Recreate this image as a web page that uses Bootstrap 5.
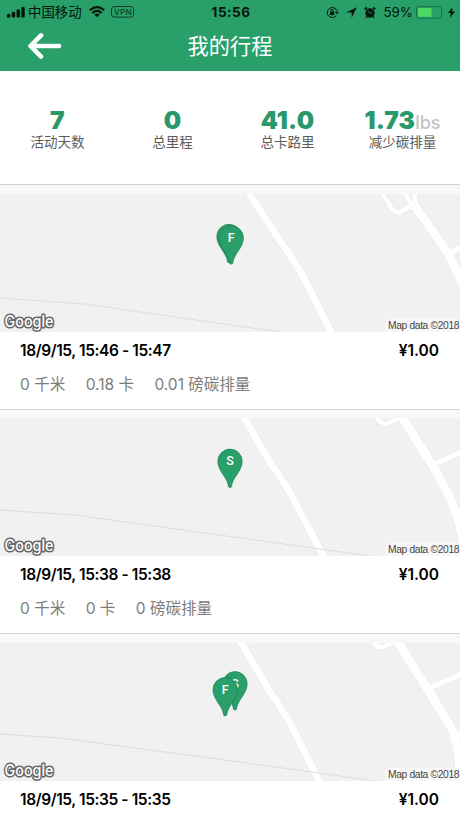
<!DOCTYPE html>
<html lang="zh-CN">
<head>
    <meta charset="UTF-8">
    <meta name="viewport" content="width=device-width, initial-scale=1.0">
    <title>我的行程</title>
    <!-- Bootstrap CSS -->
    <link href="https://cdn.jsdelivr.net/npm/bootstrap@5.3.0/dist/css/bootstrap.min.css" rel="stylesheet">
    <style>
        body {
            font-family: Inter, "Noto Sans CJK SC", sans-serif;
            background: #f8f8f8;
            height: 818px;
            overflow: hidden;
        }
        svg { display: block; flex-shrink: 0; }
        .app-top { background: #29a06a; height: 71px; }
        .status-bar { height: 24px; padding: 0 5px 0 7px; font-size: 13px; color: #04150c; line-height: 24px; }
        .status-side { flex: 1 1 0; }
        .status-clock { font-weight: 700; font-size: 13.5px; letter-spacing: .5px; }
        .title-bar { height: 47px; padding: 0 28px; color: #fff; }
        .title-bar h1 { font-size: 21.2px; line-height: 44px; font-weight: 400; padding-bottom: 3px; }
        .title-side { width: 34px; }
        .stats { height: 114px; background: #fff; border-bottom: 1px solid #d2d2d2; padding-top: 37px; }
        .stat-num { height: 25px; font-size: 24.5px; font-weight: 900; line-height: 25px; letter-spacing: .2px; color: #29986a; white-space: nowrap; }
        .stat-unit { font-size: 18px; font-weight: 500; line-height: 1; letter-spacing: 0; color: #c4c4c4; }
        .stat-label { font-size: 13.5px; line-height: 19px; color: #5c5c5c; }
        .trip { margin-top: 8.5px; height: 216px; background: #fff; border-bottom: 1px solid #d6d6d6; }
        .trip:last-child { height: 175px; border-bottom: 0; }
        .trip-map { height: 138px; }
        .trip-head { padding: 7px 21px 0 20px; font-size: 15.5px; line-height: 24px; font-weight: 600; color: #000; }
        .trip-time { letter-spacing: -.4px; }
        .trip-data { padding: 10px 20px 0; gap: 20.5px; font-size: 15.5px; line-height: 24px; color: #7d7d7d; }
        .road { fill: none; stroke: #fff; stroke-linejoin: round; }
        .road-edge { fill: none; stroke: #e6e6e6; stroke-linejoin: round; }
        .border-line { fill: none; stroke: #dcdddc; stroke-width: 1; }
    </style>
</head>
<body>
    <header class="app-top">
        <div class="status-bar d-flex align-items-center">
            <div class="status-side d-flex align-items-center">
                <svg width="18" height="11" viewBox="0 0 18 11" fill="#04150c">
                    <rect x="0" y="7" width="3.4" height="3.6" rx=".8"/><rect x="4.8" y="5" width="3.4" height="5.6" rx=".8"/>
                    <rect x="9.6" y="2.6" width="3.4" height="8" rx=".8"/><rect x="14.3" y="0" width="3.4" height="10.6" rx=".8"/>
                </svg>
                <span style="margin-left:3px;font-size:13.4px">中国移动</span>
                <svg width="16" height="12" viewBox="0 0 16 12" fill="none" stroke="#04150c" stroke-width="2.1" style="margin-left:7px">
                    <path d="M.8 4.3Q8-2 15.2 4.3"/><path d="M3.3 7Q8 2.9 12.7 7"/><path d="M8 11.2L5.3 8.5Q8 6.4 10.7 8.5Z" fill="#04150c" stroke="none"/>
                </svg>
                <svg width="23" height="12" viewBox="0 0 23 12" style="margin-left:6px">
                    <rect x=".5" y=".5" width="22" height="10.6" rx="2.6" fill="none" stroke="#0c3f27"/>
                    <text x="3" y="8.7" font-size="8" font-weight="500" fill="#0c3f27" textLength="17.5">VPN</text>
                </svg>
            </div>
            <div class="status-clock">15:56</div>
            <div class="status-side d-flex align-items-center justify-content-end">
                <svg width="13" height="13" viewBox="0 0 13 13" fill="none" stroke="#04150c">
                    <path d="M10.3 9.6A5 5 0 1 1 11 4.8M9.6 6h2.8l-1.3 1.8z"/>
                    <rect x="4" y="5.7" width="4.3" height="3.4" fill="#04150c" stroke="none"/><path d="M4.9 6V4.6a1.25 1.25 0 0 1 2.5 0V6"/>
                </svg>
                <svg width="11" height="11" viewBox="0 0 11 11" fill="#04150c" style="margin-left:7px"><path d="M10.8.2L5.7 10.8V5.4H.2Z"/></svg>
                <svg width="12" height="13" viewBox="0 0 12 13" style="margin-left:7px">
                    <circle cx="6" cy="7" r="4.7" fill="#04150c"/><path d="M.9 3.3L3 1.5M11.1 3.3L9 1.5" stroke="#04150c" stroke-width="1.8"/><path d="M3 10.4L2 11.8M9 10.4L10 11.8" stroke="#04150c" stroke-width="1.3"/>
                    <path d="M3.8 4.9L6 7h2.3" fill="none" stroke="#29a06a" stroke-width=".9"/>
                </svg>
                <span style="margin-left:7px;font-size:13.4px">59%</span>
                <svg width="29" height="13" viewBox="0 0 29 13" style="margin-left:3px">
                    <rect x=".6" y=".6" width="25" height="11.6" rx="2" fill="none" stroke="#187249"/>
                    <rect x="2" y="2" width="13.5" height="8.8" rx=".6" fill="#4cd964"/><path d="M27 4.3q1.6 2 0 4z" fill="#187249"/>
                </svg>
                <svg width="7" height="11" viewBox="0 0 7 11" fill="#04150c" style="margin-left:3px"><path d="M4.7 0L0 6h2.8L1.9 11 7 4.6H4Z"/></svg>
            </div>
        </div>
        <div class="title-bar d-flex align-items-center justify-content-between">
            <svg width="34" height="28" viewBox="0 0 34 28" fill="none" stroke="#fff" stroke-width="4.6" stroke-linecap="round" stroke-linejoin="round" style="margin-bottom:3px">
                <path d="M31 14H3M13 3.4L2.5 14 13 24.6"/>
            </svg>
            <h1 class="mb-0">我的行程</h1>
            <div class="title-side"></div>
        </div>
    </header>

    <section class="stats">
        <div class="row g-0 text-center">
            <div class="col-3"><div class="stat-num">7</div><div class="stat-label">活动天数</div></div>
            <div class="col-3"><div class="stat-num">0</div><div class="stat-label">总里程</div></div>
            <div class="col-3"><div class="stat-num">41.0</div><div class="stat-label">总卡路里</div></div>
            <div class="col-3"><div class="stat-num">1.73<span class="stat-unit">lbs</span></div><div class="stat-label">减少碳排量</div></div>
        </div>
    </section>

    <main id="tripList"></main>

    <!-- Bootstrap JS and dependencies -->
    <script src="https://cdn.jsdelivr.net/npm/bootstrap@5.3.0/dist/js/bootstrap.bundle.min.js"></script>
    <script>
        // roads are [path, width], pins are [letter, x, y] with the tip at x,y
        const trips = [
            {
                time: '18/9/15, 15:46 - 15:47', price: '¥1.00',
                data: ['0 千米', '0.18 卡', '0.01 磅碳排量'],
                roads: [
                    ['M247-4L280 47Q298 71 309 94L333 142', 7],
                    ['M381-3L391 13Q396 21 402 17L413 11', 4.5],
                    ['M403-3L413 12M414-3L416 13', 4.5],
                    ['M412 8L448 59L466 97', 9],
                    ['M447 60L464 52', 5.5]
                ],
                line: 'M0 104L85 110L280 138',
                pins: [['', 229, 69], ['F', 231.2, 70.4]]
            },
            {
                time: '18/9/15, 15:38 - 15:38', price: '¥1.00',
                data: ['0 千米', '0 卡', '0 磅碳排量'],
                roads: [
                    ['M242-4L271 46Q288 69 297 88L326 143', 7],
                    ['M375-3Q382 9 389 5L400-1', 4.5],
                    ['M400-4L435 51L450 80Q459 98 463 124', 9],
                    ['M435 46L464 33', 5.5]
                ],
                line: 'M0 92L75 97L277 125L370 138',
                pins: [['S', 230, 69.8]]
            },
            {
                time: '18/9/15, 15:35 - 15:35', price: '¥1.00',
                data: [],
                roads: [
                    ['M239-4L270 49Q286 71 295 90L321 142', 7],
                    ['M371-3Q378 7 385 3L394-2', 4.5],
                    ['M396-4L430 50L449 81Q457 94 460 126', 9],
                    ['M430 45L464 30M452 95L464 88', 5.5],
                    ['M454 94L464 113', 3]
                ],
                line: 'M0 91L60 95L240 119L375 138',
                pins: [['S', 235, 67.3], ['F', 225.2, 73.2]]
            }
        ];

        function pin([letter, x, y]) {
            return `
                <g transform="translate(${x} ${y})">
                    <path d="M-1.5-1C-2-10-12.2-16.5-12.2-26.5a12.2 12.2 0 0 1 24.4 0C12.2-16.5 2-10 1.5-1Q0 .6-1.5-1Z" fill="#29a06a" stroke="#1d7c51" stroke-width=".7"/>
                    <text y="-22.5" text-anchor="middle" font-family="Roboto, sans-serif" font-weight="500" font-size="12.5" fill="#fff">${letter}</text>
                </g>`;
        }

        function map(trip) {
            return `
                <svg class="trip-map w-100" viewBox="0 0 460 138">
                    <rect width="460" height="138" fill="#f1f1f1"/>
                    ${trip.roads.map(r => `<path class="road-edge" stroke-width="${r[1] + 1}" d="${r[0]}"/>`).join('')}
                    ${trip.roads.map(r => `<path class="road" stroke-width="${r[1]}" d="${r[0]}"/>`).join('')}
                    <path class="border-line" d="${trip.line}"/>
                    ${trip.pins.map(pin).join('')}
                    <text x="4.5" y="132.6" font-family="Inter, sans-serif" font-weight="500" font-size="15.5" textLength="49" lengthAdjust="spacingAndGlyphs" fill="#fff" stroke="#666" stroke-width="3" stroke-linejoin="round" paint-order="stroke">Google</text>
                    <rect x="386" y="125" width="74" height="13" fill="#f8f8f8"/>
                    <text x="388" y="134.6" font-family="Liberation Sans, sans-serif" font-size="10.3" textLength="71.5" fill="#444">Map data ©2018</text>
                </svg>`;
        }

        document.getElementById('tripList').innerHTML = trips.map(trip => `
            <article class="trip">
                ${map(trip)}
                <div class="trip-head d-flex justify-content-between"><span class="trip-time">${trip.time}</span><span>${trip.price}</span></div>
                ${trip.data.length ? `<div class="trip-data d-flex">${trip.data.map(d => `<span>${d}</span>`).join('')}</div>` : ''}
            </article>`).join('');
    </script>
</body>
</html>
